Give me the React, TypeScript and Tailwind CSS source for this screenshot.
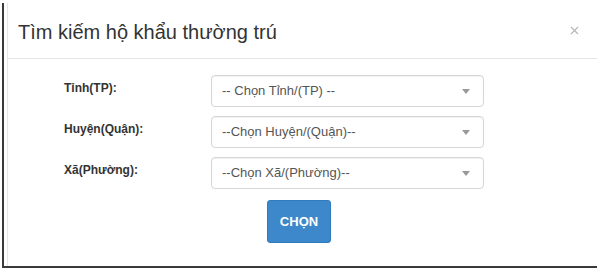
import { X } from 'lucide-react'

const fields = [
  { label: 'Tỉnh(TP):', placeholder: '-- Chọn Tỉnh/(TP) --' },
  { label: 'Huyện(Quận):', placeholder: '--Chọn Huyện/(Quận)--' },
  { label: 'Xã(Phường):', placeholder: '--Chọn Xã/(Phường)--' },
]

function SelectBox({ placeholder }: { placeholder: string }) {
  return (
    <div className="flex h-[32px] w-[273px] items-center justify-between rounded-[4px] border border-[#d6d6d6] bg-white pl-[10px] pr-[13px] shadow-[inset_0_1px_1px_rgba(0,0,0,0.06)]">
      <span className="text-[13px] text-[#555]">{placeholder}</span>
      <span className="h-0 w-0 border-x-[4px] border-t-[5px] border-x-transparent border-t-[#999]" />
    </div>
  )
}

export default function App() {
  return (
    <div className="h-[272px] w-[600px] bg-white pl-[2px] pt-[3px] font-['Liberation_Sans',Arial,sans-serif]">
      <div className="h-[265px] w-[595px] border-b-2 border-l-2 border-[#3a3a3a] pl-[3px]">
        <div className="h-full border-l border-[#e6e6e6]">
          <div className="flex h-[56px] items-center justify-between border-b border-[#e5e5e5] pl-[10px] pr-[16px]">
            <h1 className="pt-[2px] text-[20px] leading-none text-[#333]">Tìm kiếm hộ khẩu thường trú</h1>
            <X className="size-[13px] text-[#b5b5b5]" strokeWidth={2} />
          </div>
          <div className="flex flex-col pt-[16px]">
            {fields.map(f => (
              <div key={f.label} className="mb-[9px] flex">
                <div className="w-[203px] shrink-0 pl-[56px] pt-[4px] text-[12px] font-bold text-[#333]">{f.label}</div>
                <SelectBox placeholder={f.placeholder} />
              </div>
            ))}
            <div className="flex pl-[259px] pt-[2px]">
              <button className="h-[43px] w-[64px] rounded-[3px] border border-[#2f7bbd] bg-[#3d88cb] text-[13px] font-bold text-white">
                CHỌN
              </button>
            </div>
          </div>
        </div>
      </div>
    </div>
  )
}
